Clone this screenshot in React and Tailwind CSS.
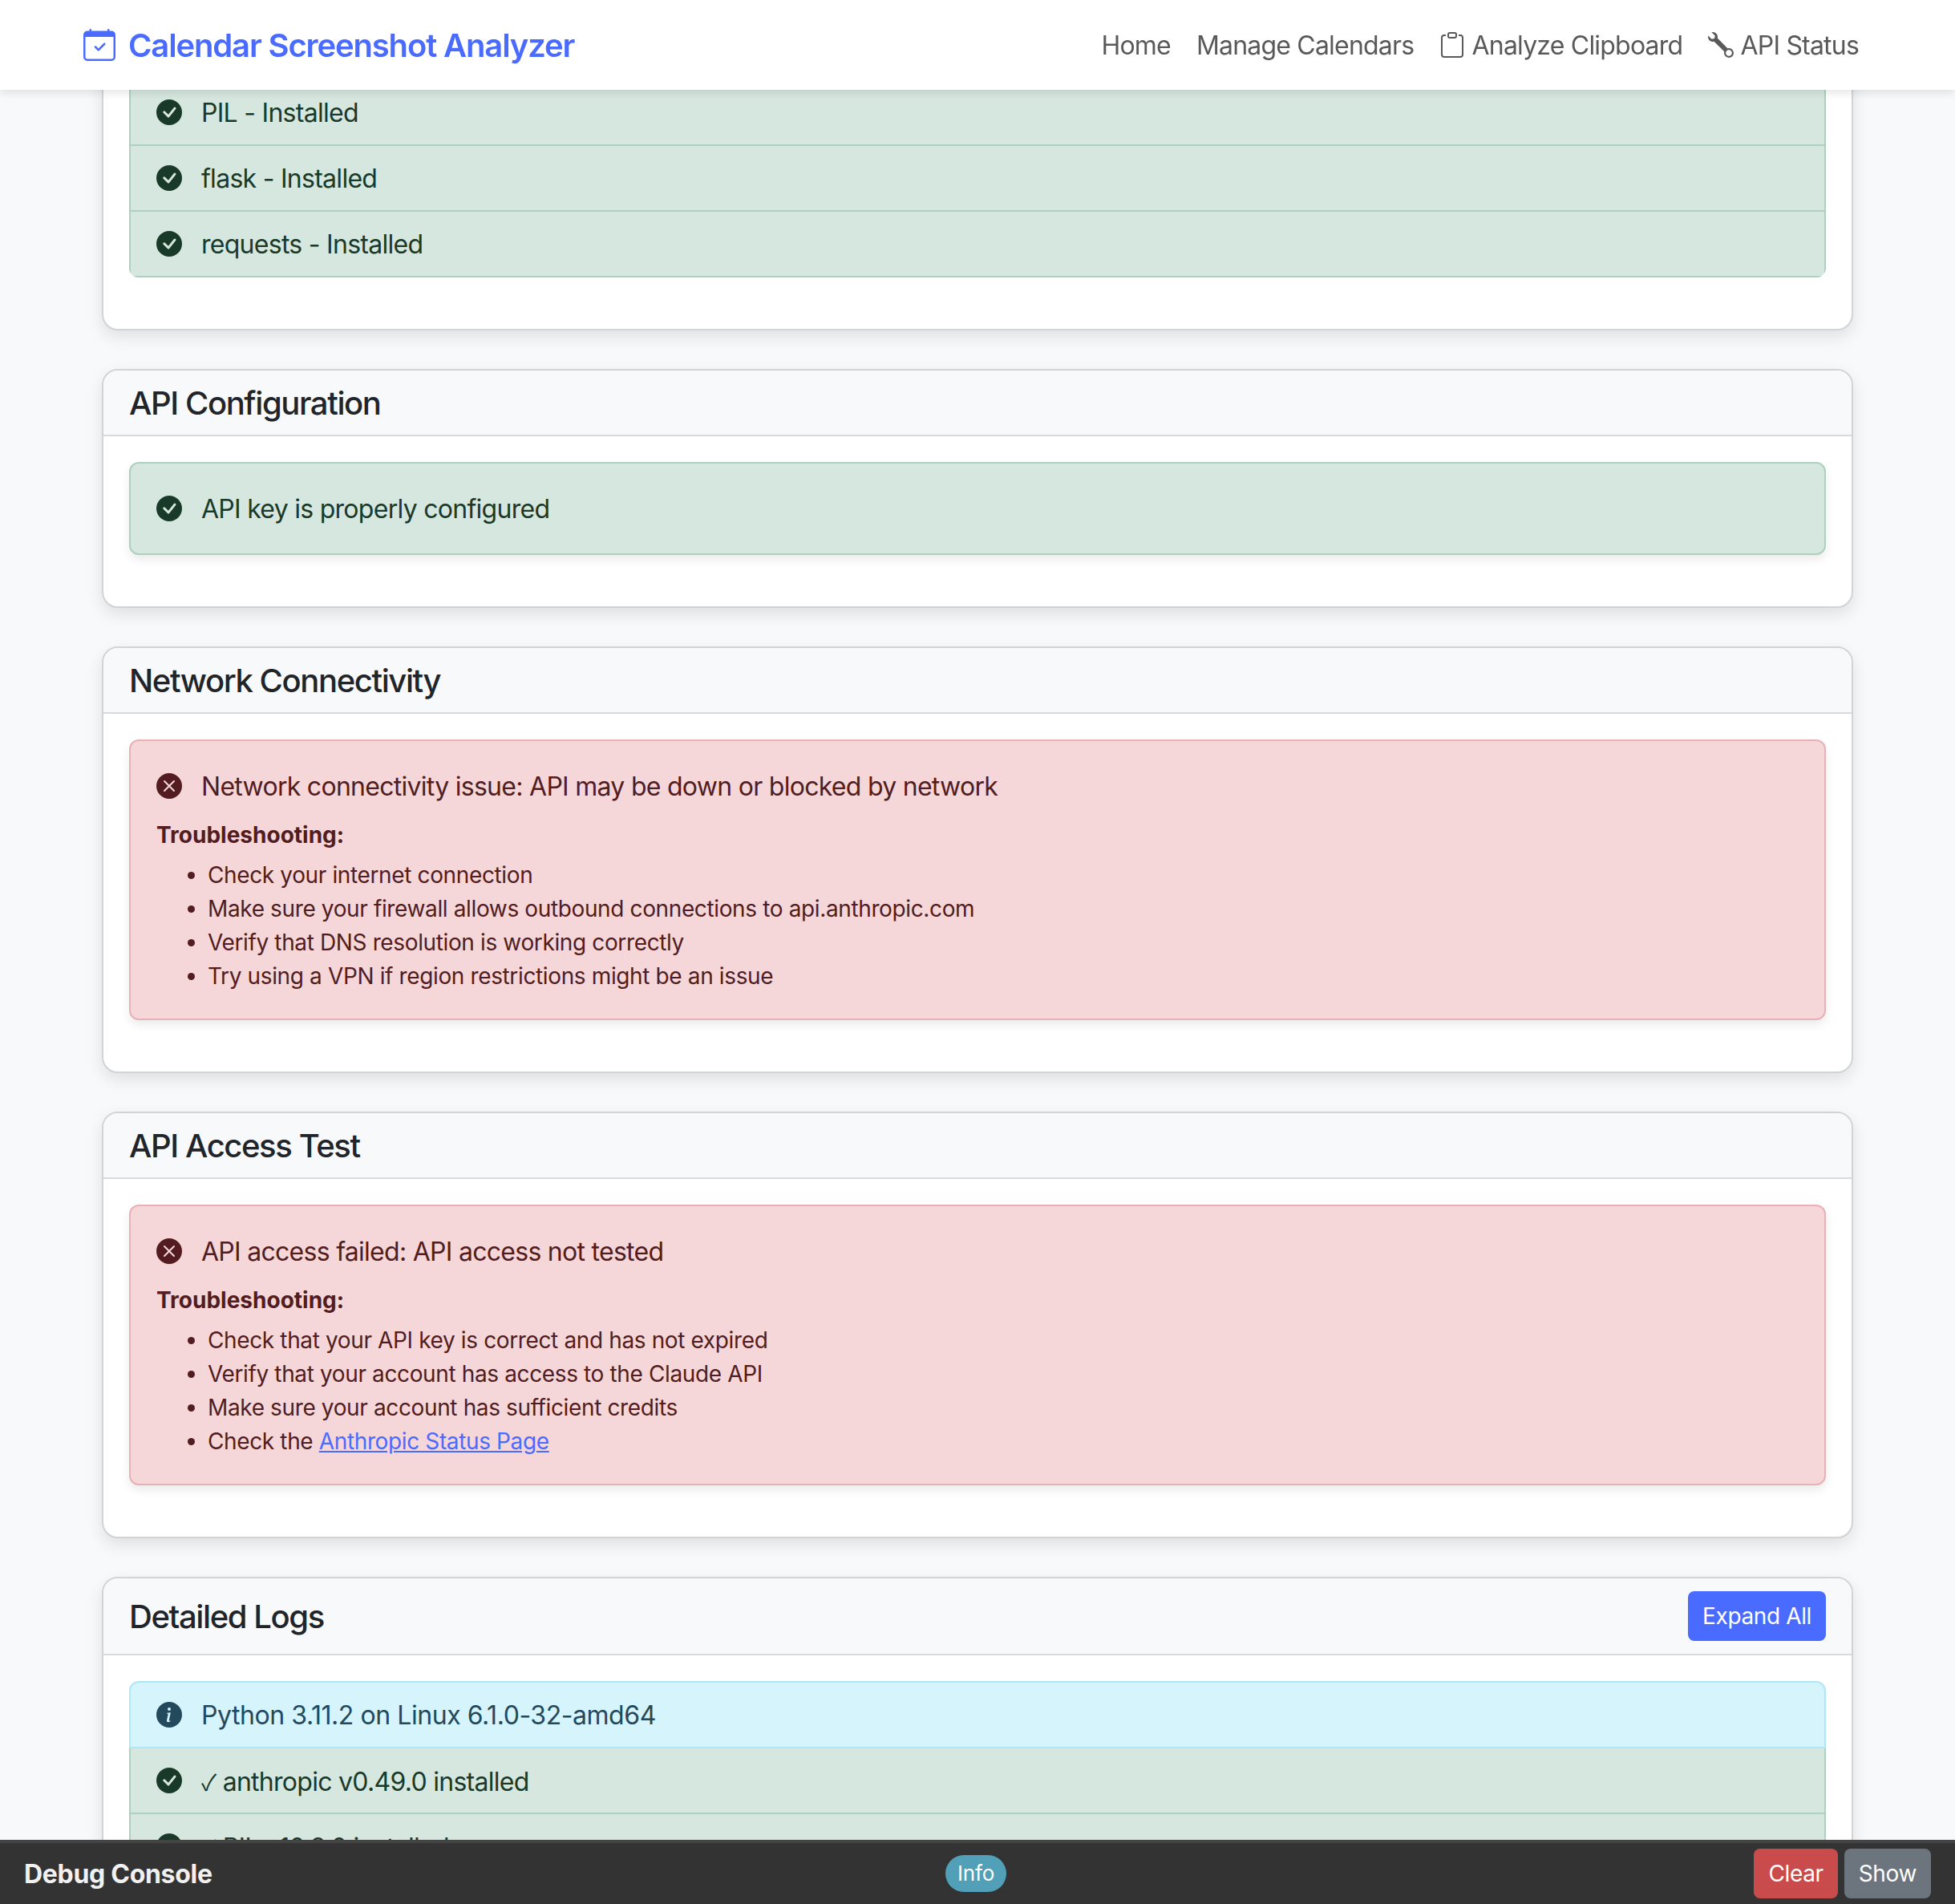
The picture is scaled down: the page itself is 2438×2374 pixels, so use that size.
import { BsCalendarCheck, BsClipboard, BsWrench, BsCheckCircleFill, BsXCircleFill, BsInfoCircleFill } from "react-icons/bs";

const tones = {
  success: { box: "bg-[#d6e7df] border-[#aed1bf] text-[#1a3a29]", Icon: BsCheckCircleFill },
  danger: { box: "bg-[#f5d7da] border-[#e9b0b5] text-[#521c20]", Icon: BsXCircleFill },
  info: { box: "bg-[#d6f4fc] border-[#aee8f8] text-[#22495c]", Icon: BsInfoCircleFill },
};

function StatusLine({ tone, children }) {
  const { Icon } = tones[tone];
  return (
    <div className="flex items-center h-12">
      <Icon className="w-8 h-8 mr-6 shrink-0" />
      <span className="pt-0.5 tracking-[-0.72px]">{children}</span>
    </div>
  );
}

function ListRow({ tone, first, children }) {
  return (
    <div className={`border-x-2 border-b-2 px-8 py-4 ${tones[tone].box} ${first ? "border-t-2 rounded-t-xl" : ""}`}>
      <StatusLine tone={tone}>{children}</StatusLine>
    </div>
  );
}

function Alert({ tone, text, tips }) {
  return (
    <div className={`border-2 rounded-xl p-8 mb-8 shadow-[0_6px_12px_rgba(0,0,0,0.08)] ${tones[tone].box}`}>
      <StatusLine tone={tone}>{text}</StatusLine>
      {tips && (
        <div className="mt-4 text-[28px] leading-[42px]">
          <div className="font-bold">Troubleshooting:</div>
          <ul className="list-disc pl-16 mt-2 tracking-[-0.37px]">
            {tips.map((tip, i) => (
              <li key={i}>{tip}</li>
            ))}
          </ul>
        </div>
      )}
    </div>
  );
}

function Card({ title, action, children }) {
  return (
    <section className="bg-white border-2 border-[#d2d3d4] rounded-[20px] mb-12 shadow-[0_8px_20px_rgba(0,0,0,0.1)]">
      <header className="flex items-center justify-between bg-[#f8f9fa] border-b-2 border-[#d9dadb] rounded-t-[18px] px-8 py-4">
        <h5 className="h-12 pt-0.5 leading-[46px] text-[40px] font-medium text-[#212529] tracking-[-1.4px]">{title}</h5>
        {action}
      </header>
      <div className="p-8">{children}</div>
    </section>
  );
}

export default function App() {
  return (
    <div className="h-screen overflow-hidden bg-[#f8f9fa] [font-family:Inter,sans-serif] text-[32px] leading-12 text-[#212529]">
      <nav className="fixed top-0 inset-x-0 z-20 h-28 bg-white shadow-[0_4px_10px_rgba(0,0,0,0.1)] flex items-center justify-between px-[104px]">
        <a className="flex items-center gap-4 text-[40px] font-semibold text-[#4a6bff] tracking-[-1.15px]">
          <BsCalendarCheck className="w-10 h-10" />
          <span className="pt-0.5">Calendar Screenshot Analyzer</span>
        </a>
        <div className="flex text-[#595959] tracking-[-0.8px] pt-0.5">
          <a className="px-4">Home</a>
          <a className="px-4">Manage Calendars</a>
          <a className="px-4">
            <BsClipboard className="inline w-8 h-8 align-[-0.125em]" /> Analyze Clipboard
          </a>
          <a className="px-4">
            <BsWrench className="inline w-8 h-8 align-[-0.125em]" /> API Status
          </a>
        </div>
      </nav>

      <main className="px-[127px]">
        {/* dependencies card, scrolled partly under the navbar */}
        <section className="bg-white border-2 border-t-0 border-[#d2d3d4] rounded-b-[20px] mb-12 shadow-[0_8px_20px_rgba(0,0,0,0.1)] px-8 pt-[98px] pb-8">
          <div className="mb-8">
            <ListRow tone="success" first>PIL - Installed</ListRow>
            <ListRow tone="success">flask - Installed</ListRow>
            <div className="rounded-b-xl overflow-hidden">
              <ListRow tone="success">requests - Installed</ListRow>
            </div>
          </div>
        </section>

        <Card title="API Configuration">
          <Alert tone="success" text="API key is properly configured" />
        </Card>

        <Card title="Network Connectivity">
          <Alert
            tone="danger"
            text="Network connectivity issue: API may be down or blocked by network"
            tips={[
              "Check your internet connection",
              "Make sure your firewall allows outbound connections to api.anthropic.com",
              "Verify that DNS resolution is working correctly",
              "Try using a VPN if region restrictions might be an issue",
            ]}
          />
        </Card>

        <Card title="API Access Test">
          <Alert
            tone="danger"
            text="API access failed: API access not tested"
            tips={[
              "Check that your API key is correct and has not expired",
              "Verify that your account has access to the Claude API",
              "Make sure your account has sufficient credits",
              <>
                Check the <a className="text-[#4a6bff] underline">Anthropic Status Page</a>
              </>,
            ]}
          />
        </Card>

        <Card
          title="Detailed Logs"
          action={
            <button className="bg-[#4a6bff] text-white text-[28px] leading-[42px] tracking-[-0.37px] px-[18px] py-2.5 rounded-lg">
              Expand All
            </button>
          }
        >
          <ListRow tone="info" first>
            <span className="tracking-[-0.44px]">Python 3.11.2 on Linux 6.1.0-32-amd64</span>
          </ListRow>
          <ListRow tone="success">
            <span className="[font-family:'Noto_Sans_CJK_JP'] text-[28px]">✓</span> anthropic v0.49.0 installed
          </ListRow>
          <ListRow tone="success">
            <span className="[font-family:'Noto_Sans_CJK_JP'] text-[28px]">✓</span> PIL v10.3.0 installed
          </ListRow>
        </Card>
      </main>

      <footer className="fixed bottom-0 inset-x-0 z-20 h-20 bg-[#333333] border-t-4 border-[#444444] flex items-center justify-between px-[30px]">
        <div className="font-bold text-[#f1f1f1] tracking-[-0.3px] pt-0.5">Debug Console</div>
        <span className="bg-[#52a0b8] text-white text-[26px] leading-[46px] tracking-[-0.2px] px-[15px] rounded-[23px] mr-[18px]">Info</span>
        <div className="flex gap-2">
          <button className="bg-[#c94b4b] text-white text-[28px] leading-[42px] tracking-[-0.37px] px-[18px] py-2.5 rounded-lg">Clear</button>
          <button className="bg-[#6c757d] text-white text-[28px] leading-[42px] tracking-[-0.37px] px-[18px] py-2.5 rounded-lg">Show</button>
        </div>
      </footer>
    </div>
  );
}
